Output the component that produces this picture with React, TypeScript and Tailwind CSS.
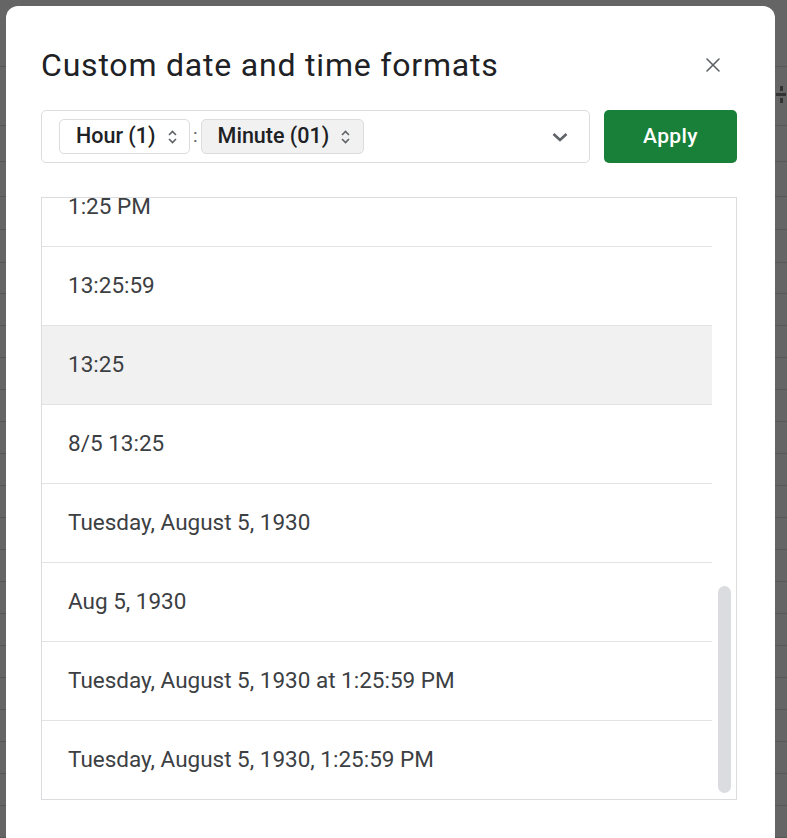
import { X } from 'lucide-react'

const ROWS = [
  '1:25 PM',
  '13:25:59',
  '13:25',
  '8/5 13:25',
  'Tuesday, August 5, 1930',
  'Aug 5, 1930',
  'Tuesday, August 5, 1930 at 1:25:59 PM',
  'Tuesday, August 5, 1930, 1:25:59 PM',
]

const GRID = [67, 59, 36, 35, 33, 33, 31, 32, 32, 32, 32, 32, 32, 32, 32, 32, 32, 32, 32, 32, 32, 32, 32, 32]

function UpDown() {
  return (
    <svg width="11" height="18" viewBox="0 0 11 18" className="shrink-0 text-[#5f6368]">
      <path d="M2 7 L5.5 3.5 L9 7" fill="none" stroke="currentColor" strokeWidth="1.6" />
      <path d="M2 11 L5.5 14.5 L9 11" fill="none" stroke="currentColor" strokeWidth="1.6" />
    </svg>
  )
}

function Chip({ label, width, filled }: { label: string; width: string; filled?: boolean }) {
  return (
    <div
      className={`flex h-[35px] items-center gap-[11px] rounded-[5px] border border-[#dadce0] pl-[16px] text-[21.5px] font-medium text-[#202124] ${width} ${
        filled ? 'bg-[#f1f1f1]' : 'bg-white'
      }`}
    >
      <span className="whitespace-nowrap">{label}</span>
      <UpDown />
    </div>
  )
}

export default function App() {
  return (
    <div className="relative h-[838px] w-[787px] overflow-hidden bg-[#656565] font-['Roboto',sans-serif]">
      <div className="flex flex-col">
        {GRID.map((h, i) => (
          <div key={i} className="border-b border-[#575757]" style={{ height: h }} />
        ))}
      </div>
      <div className="absolute right-[1px] top-[86px] flex flex-col items-center gap-[2px]">
        <div className="h-[5px] w-[3px] bg-[#333]" />
        <div className="h-[3px] w-[10px] bg-[#333]" />
        <div className="h-[5px] w-[3px] bg-[#333]" />
      </div>

      <div className="absolute left-[6px] top-[6px] flex h-[844px] w-[769px] flex-col rounded-[12px] bg-white pl-[35px] pr-[38px]">
        <div className="flex h-[104px] items-center justify-between pt-[14px]">
          <h1 className="text-[32px] font-normal tracking-[0.8px] text-[#202124]">Custom date and time formats</h1>
          <X className="mr-[12px] h-[24px] w-[24px] text-[#5f6368]" strokeWidth={1.6} />
        </div>

        <div className="flex h-[53px] gap-[14px]">
          <div className="flex flex-1 items-center rounded-[5px] border border-[#dadce0] pl-[17px] pr-[20px]">
            <Chip label="Hour (1)" width="w-[131px]" />
            <span className="mx-[3px] text-[19px] text-[#5f6368]">:</span>
            <Chip label="Minute (01)" width="w-[163px]" filled />
            <div className="flex-1" />
            <svg width="18" height="12" viewBox="0 0 18 12" className="text-[#5f6368]">
              <path d="M2.5 3 L9 9 L15.5 3" fill="none" stroke="currentColor" strokeWidth="2.6" />
            </svg>
          </div>
          <button className="w-[133px] rounded-[5px] bg-[#188038] text-[21px] font-medium tracking-[0.4px] text-white">
            Apply
          </button>
        </div>

        <div className="relative mt-[34px] h-[603px] overflow-hidden border border-[#dadce0]">
          <div className="mr-[24px] mt-[-30px]">
            {ROWS.map((row, i) => (
              <div
                key={row}
                className={`flex h-[79px] items-center border-b border-[#e3e3e3] pl-[26px] text-[22.5px] text-[#3c4043] ${
                  i === 2 ? 'bg-[#f1f1f1]' : ''
                }`}
              >
                {row}
              </div>
            ))}
          </div>
          <div className="absolute right-[5px] top-[388px] h-[207px] w-[13px] rounded-full bg-[#dadce0]" />
        </div>
      </div>
    </div>
  )
}
